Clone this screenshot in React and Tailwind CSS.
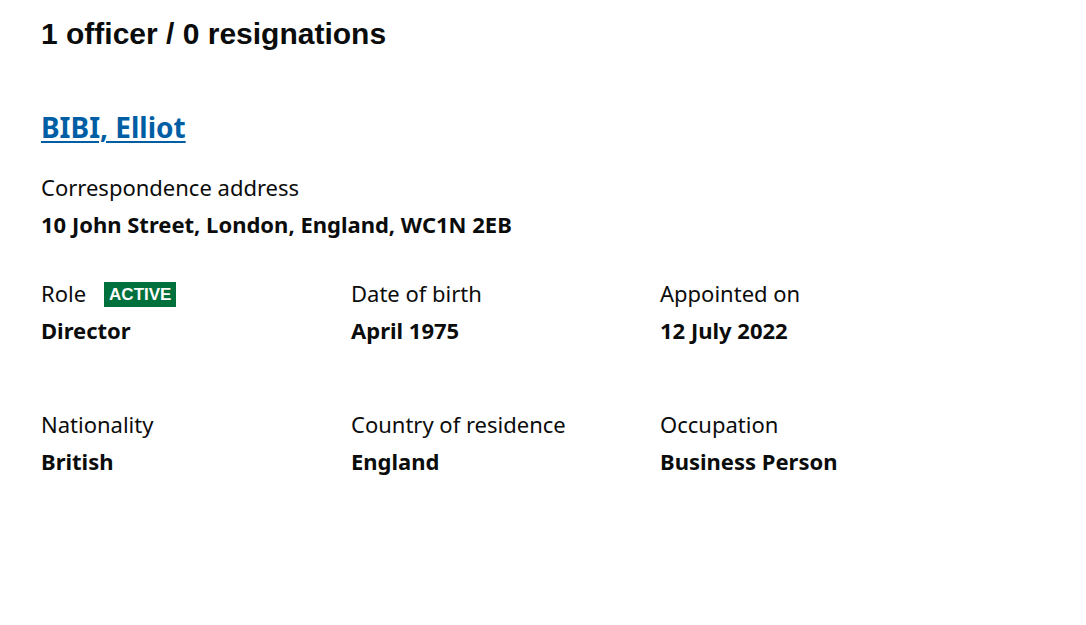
import React from "react";

function Item({ label, value, badge }) {
  return (
    <div>
      <div className="flex items-center h-[26px] text-[22px] text-[#0b0c0c]">
        <span>{label}</span>
        {badge && (
          <span className="ml-[18px] mt-[2px] bg-[#00703c] text-white font-bold text-[17px] leading-none px-[5px] h-[25px] flex items-center font-['Liberation_Sans',Arial,sans-serif]">
            ACTIVE
          </span>
        )}
      </div>
      <div className="mt-[11px] text-[22px] font-bold text-[#0b0c0c] leading-[26px]">{value}</div>
    </div>
  );
}

export default function App() {
  return (
    <div className="bg-white w-[1086px] h-[625px] pl-[41px] pt-[17px] font-['Noto_Sans',sans-serif]">
      <h2 className="text-[30px] font-bold leading-[34px] text-[#0b0c0c] font-['Liberation_Sans',Arial,sans-serif]">
        1 officer / 0 resignations
      </h2>
      <a href="#" className="block mt-[59px] text-[28px] font-bold text-[#005ea5] underline underline-offset-[3px] decoration-[2px] leading-[34px] w-fit">
        BIBI, Elliot
      </a>
      <div className="mt-[30px] text-[22px] text-[#0b0c0c] leading-[26px]">Correspondence address</div>
      <div className="mt-[11px] text-[22px] font-bold text-[#0b0c0c] leading-[26px]">10 John Street, London, England, WC1N 2EB</div>
      <div className="grid grid-cols-[310px_309px_310px] mt-[43px] gap-y-[68px]">
        <Item label="Role" value="Director" badge />
        <Item label="Date of birth" value="April 1975" />
        <Item label="Appointed on" value="12 July 2022" />
        <Item label="Nationality" value="British" />
        <Item label="Country of residence" value="England" />
        <Item label="Occupation" value="Business Person" />
      </div>
    </div>
  );
}
